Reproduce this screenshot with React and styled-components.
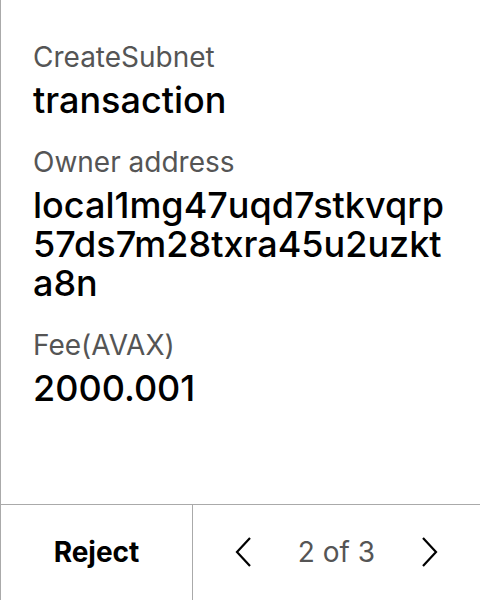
import styled, { createGlobalStyle } from "styled-components"

const GlobalStyle = createGlobalStyle`
    html, body {
        margin: 0;
        padding: 0;
        background: #fff;
        font-family: Inter, "Noto Sans", sans-serif;
    }
`

const Screen = styled.div`
    height: 600px;
    width: 480px;
    box-sizing: border-box;
    border-left: 1px solid #aaa;
    display: flex;
    flex-direction: column;
`

const Content = styled.div`
    flex: 1;
    padding: 40px 30px 0 32px;
    display: flex;
    flex-direction: column;
`

const Field = styled.div`
    display: flex;
    flex-direction: column;
    gap: 7px;
    margin-bottom: 25px;
`

const Label = styled.span`
    font-size: 28px;
    line-height: 34px;
    color: #555;
`

const Value = styled.span`
    font-size: 36px;
    line-height: 39px;
    color: #000;
    font-weight: 500;
    word-break: break-all;
`

const Footer = styled.div`
    height: 95px;
    border-top: 1px solid #aaa;
    display: flex;
`

const RejectButton = styled.button`
    width: 192px;
    border: none;
    border-right: 1px solid #aaa;
    background: none;
    font-family: inherit;
    font-size: 28px;
    font-weight: 700;
    color: #000;
    padding: 0 0 2px;
`

const Pager = styled.div`
    flex: 1;
    display: flex;
    align-items: center;
    justify-content: space-between;
    padding: 0 42px 2px;
`

const PageText = styled.span`
    font-size: 28px;
    color: #555;
`

const Arrow = styled.button`
    border: none;
    background: none;
    padding: 0;
    display: flex;
`

function Chevron({ dir }) {
    const d = dir === "left" ? "M15 1 L2 15 L15 29" : "M1 1 L14 15 L1 29"
    return (
        <svg width="16" height="30" viewBox="0 0 16 30">
            <path d={d} fill="none" stroke="#000" strokeWidth="2.2" />
        </svg>
    )
}

export default function App() {
    return (
        <>
            <GlobalStyle />
            <Screen>
                <Content>
                    <Field>
                        <Label>CreateSubnet</Label>
                        <Value>transaction</Value>
                    </Field>
                    <Field>
                        <Label>Owner address</Label>
                        <Value>local1mg47uqd7stkvqrp57ds7m28txra45u2uzkta8n</Value>
                    </Field>
                    <Field>
                        <Label>Fee(AVAX)</Label>
                        <Value>2000.001</Value>
                    </Field>
                </Content>
                <Footer>
                    <RejectButton>Reject</RejectButton>
                    <Pager>
                        <Arrow><Chevron dir="left" /></Arrow>
                        <PageText>2 of 3</PageText>
                        <Arrow><Chevron dir="right" /></Arrow>
                    </Pager>
                </Footer>
            </Screen>
        </>
    )
}
